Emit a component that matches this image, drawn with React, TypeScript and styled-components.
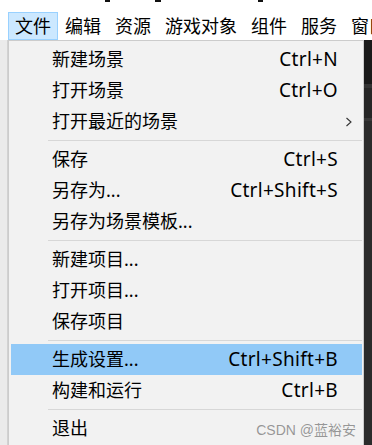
import React from "react";
import styled, { createGlobalStyle } from "styled-components";

const Global = createGlobalStyle`
  html, body { margin: 0; padding: 0; background: #ffffff; overflow: hidden; }
  body { width: 372px; height: 445px; }
  * { box-sizing: border-box; }
`;

const FONT = `"Noto Sans", "Noto Sans CJK SC", sans-serif`;

const Screen = styled.div`
  position: relative;
  width: 372px;
  height: 445px;
  overflow: hidden;
  display: flex;
  flex-direction: column;
  font-family: ${FONT};
  color: #000;
`;

const TopStrip = styled.div`
  height: 12px;
  display: flex;
  align-items: flex-start;
  background: #fff;
`;

const CutMark = styled.span<{ $gap: number; $w: number }>`
  display: block;
  margin-left: ${(p) => p.$gap}px;
  width: ${(p) => p.$w}px;
  height: 2px;
  background: #111;
`;

const MenuBar = styled.div`
  height: 28px;
  display: flex;
  padding-left: 8px;
  background: #fff;
  overflow: hidden;
`;

const MenuTitle = styled.div<{ $active?: boolean }>`
  flex: none;
  height: 28px;
  padding: 0 6px;
  font-size: 18px;
  line-height: 26px;
  white-space: nowrap;
  border: 1px solid ${(p) => (p.$active ? "#99d1ff" : "transparent")};
  background: ${(p) => (p.$active ? "#cce8ff" : "transparent")};
`;

const Body = styled.div`
  flex: 1;
  display: flex;
  min-height: 0;
`;

const Gutter = styled.div`
  width: 8px;
  background: #ebebeb;
  border-right: 1px solid #d2d2d2;
`;

const Dropdown = styled.div`
  width: 356px;
  background: #f2f2f2;
  border: 1px solid #cccccc;
  border-bottom: none;
  padding: 3px 1px 0 2px;
  display: flex;
  flex-direction: column;
`;

const DarkSide = styled.div`
  flex: 1;
  display: flex;
  flex-direction: column;
  background: #2a2a2a;
`;

const DarkBand = styled.div<{ $h: number; $c: string }>`
  height: ${(p) => p.$h}px;
  background: ${(p) => p.$c};
`;

const Row = styled.div<{ $hl?: boolean }>`
  height: 31px;
  flex: none;
  display: grid;
  grid-template-columns: 1fr auto 24px;
  align-items: center;
  padding-left: 41px;
  font-size: 18px;
  line-height: 31px;
  white-space: nowrap;
  background: ${(p) => (p.$hl ? "#91c9f7" : "transparent")};
`;

const Label = styled.span``;

const Shortcut = styled.span`
  text-align: right;
  font-size: 19px;
  letter-spacing: 0.3px;
`;

const ArrowCell = styled.span`
  display: flex;
  align-items: center;
  padding-left: 7px;
`;

const Separator = styled.div`
  height: 7px;
  flex: none;
  padding-top: 3px;
  padding-left: 37px;
  &::after {
    content: "";
    display: block;
    height: 1px;
    background: #d7d7d7;
  }
`;

const Watermark = styled.div`
  position: absolute;
  right: 16px;
  bottom: 7px;
  font-family: "Liberation Sans", "Noto Sans CJK SC", sans-serif;
  font-size: 14px;
  line-height: 16px;
  color: rgba(120, 120, 120, 0.75);
  white-space: nowrap;
`;

type Item =
  | { kind: "item"; label: string; shortcut?: string; sub?: boolean; hl?: boolean }
  | { kind: "sep" };

const items: Item[] = [
  { kind: "item", label: "新建场景", shortcut: "Ctrl+N" },
  { kind: "item", label: "打开场景", shortcut: "Ctrl+O" },
  { kind: "item", label: "打开最近的场景", sub: true },
  { kind: "sep" },
  { kind: "item", label: "保存", shortcut: "Ctrl+S" },
  { kind: "item", label: "另存为...", shortcut: "Ctrl+Shift+S" },
  { kind: "item", label: "另存为场景模板..." },
  { kind: "sep" },
  { kind: "item", label: "新建项目..." },
  { kind: "item", label: "打开项目..." },
  { kind: "item", label: "保存项目" },
  { kind: "sep" },
  { kind: "item", label: "生成设置...", shortcut: "Ctrl+Shift+B", hl: true },
  { kind: "item", label: "构建和运行", shortcut: "Ctrl+B" },
  { kind: "sep" },
  { kind: "item", label: "退出" },
];

const menus = ["文件", "编辑", "资源", "游戏对象", "组件", "服务", "窗口"];

const Chevron = () => (
  <svg width="8" height="10" viewBox="0 0 8 10">
    <path d="M1.5 1 L6 5 L1.5 9" fill="none" stroke="#333" strokeWidth="1.1" />
  </svg>
);

export default function App() {
  return (
    <Screen>
      <Global />
      <TopStrip>
        <CutMark $gap={105} $w={5} />
        <CutMark $gap={45} $w={6} />
        <CutMark $gap={97} $w={5} />
      </TopStrip>
      <MenuBar>
        {menus.map((m, i) => (
          <MenuTitle key={m} $active={i === 0}>
            {m}
          </MenuTitle>
        ))}
      </MenuBar>
      <Body>
        <Gutter />
        <Dropdown>
          {items.map((it, i) =>
            it.kind === "sep" ? (
              <Separator key={i} />
            ) : (
              <Row key={i} $hl={it.hl}>
                <Label>{it.label}</Label>
                <Shortcut>{it.shortcut ?? ""}</Shortcut>
                <ArrowCell>{it.sub ? <Chevron /> : null}</ArrowCell>
              </Row>
            )
          )}
        </Dropdown>
        <DarkSide>
          <DarkBand $h={44} $c="#1a1a1a" />
          <DarkBand $h={4} $c="#333333" />
          <DarkBand $h={30} $c="#262626" />
          <DarkBand $h={3} $c="#383838" />
          <DarkBand $h={324} $c="#2b2b2b" />
        </DarkSide>
      </Body>
      <Watermark>CSDN @蓝裕安</Watermark>
    </Screen>
  );
}
